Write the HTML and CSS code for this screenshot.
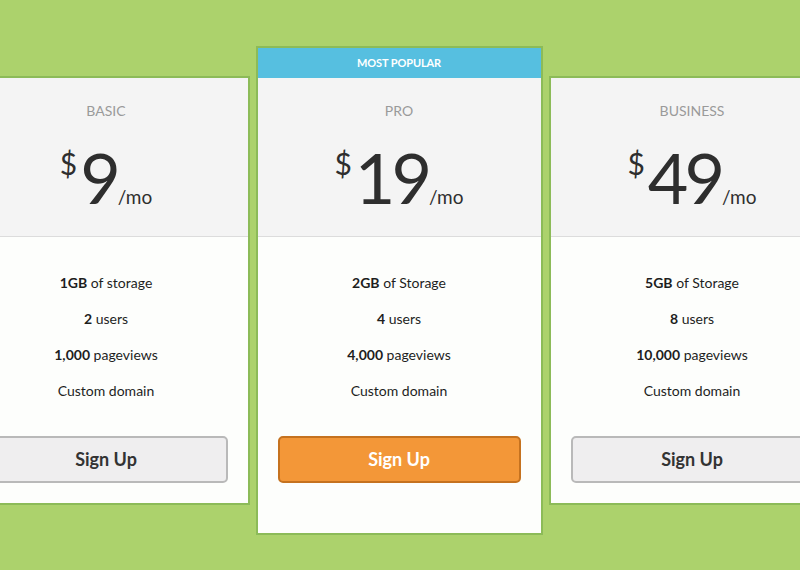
FILE: index.html
```html
<!DOCTYPE html>
<html>
<head>
<meta charset="utf-8">
<link rel="stylesheet" href="styles.css">
</head>
<body>
<div class="plans">
  <div class="card">
    <div class="head">
      <div class="name">Basic</div>
      <div class="price"><span class="cur">$</span><span class="amt">9</span><span class="per">/mo</span></div>
    </div>
    <div class="body">
      <ul class="features">
        <li><b>1GB</b> of storage</li>
        <li><b>2</b> users</li>
        <li><b>1,000</b> pageviews</li>
        <li>Custom domain</li>
      </ul>
      <button class="btn">Sign Up</button>
    </div>
  </div>
  <div class="card featured">
    <div class="band">Most Popular</div>
    <div class="head">
      <div class="name">Pro</div>
      <div class="price"><span class="cur">$</span><span class="amt">19</span><span class="per">/mo</span></div>
    </div>
    <div class="body">
      <ul class="features">
        <li><b>2GB</b> of Storage</li>
        <li><b>4</b> users</li>
        <li><b>4,000</b> pageviews</li>
        <li>Custom domain</li>
      </ul>
      <button class="btn primary">Sign Up</button>
    </div>
  </div>
  <div class="card">
    <div class="head">
      <div class="name">Business</div>
      <div class="price"><span class="cur">$</span><span class="amt">49</span><span class="per">/mo</span></div>
    </div>
    <div class="body">
      <ul class="features">
        <li><b>5GB</b> of Storage</li>
        <li><b>8</b> users</li>
        <li><b>10,000</b> pageviews</li>
        <li>Custom domain</li>
      </ul>
      <button class="btn">Sign Up</button>
    </div>
  </div>
</div>
</body>
</html>
```

FILE: styles.css
```css
html, body {
  margin: 0;
  padding: 0;
  height: 100%;
}
body {
  background: #acd26c;
  font-family: "Source Sans Pro", Lato, "Open Sans", sans-serif;
  overflow: hidden;
}
.plans {
  width: 800px;
  height: 570px;
  box-sizing: border-box;
  padding-top: 10px;
  padding-right: 2px;
  display: flex;
  justify-content: center;
  align-items: center;
  gap: 6px;
}
.card {
  flex: 0 0 287px;
  box-sizing: border-box;
  border: 2px solid #8cbb58;
  background: #fdfefc;
  display: flex;
  flex-direction: column;
}
.band {
  height: 30px;
  background: #56bfe0;
  color: #fff;
  font-size: 11px;
  font-weight: 700;
  text-transform: uppercase;
  display: flex;
  align-items: center;
  justify-content: center;
  letter-spacing: -0.1px;
}
.head {
  height: 159px;
  box-sizing: border-box;
  background: #f4f4f4;
  border-bottom: 1px solid #dcdcdc;
  padding-top: 23px;
  text-align: center;
}
.name {
  font-size: 14px;
  line-height: 20px;
  color: #9a9a9a;
  text-transform: uppercase;
}
.price {
  margin-top: 21px;
  display: flex;
  justify-content: center;
  align-items: baseline;
  color: #2e2e2e;
}
.cur {
  align-self: flex-start;
  font-size: 30px;
  line-height: 30px;
  margin-top: 6px;
  margin-right: 3px;
}
.amt {
  font-size: 70px;
  line-height: 70px;
  font-weight: 400;
  letter-spacing: -4px;
}
.per {
  font-size: 19px;
  line-height: 20px;
  margin-left: 1px;
}
.body {
  padding: 28px 20px 20px;
  display: flex;
  flex-direction: column;
}
.featured .body {
  padding-bottom: 50px;
}
.features {
  list-style: none;
  margin: 0 0 27px;
  padding: 0;
  text-align: center;
  font-size: 14px;
  color: #1e1e1e;
}
.features li {
  line-height: 36px;
}
.btn {
  height: 47px;
  border: 2px solid #b9b9b9;
  border-radius: 5px;
  background: #efeeef;
  color: #333;
  font-family: inherit;
  font-size: 18px;
  font-weight: 700;
}
.btn.primary {
  background: #f39738;
  border-color: #c5721f;
  color: #fff;
}
```
